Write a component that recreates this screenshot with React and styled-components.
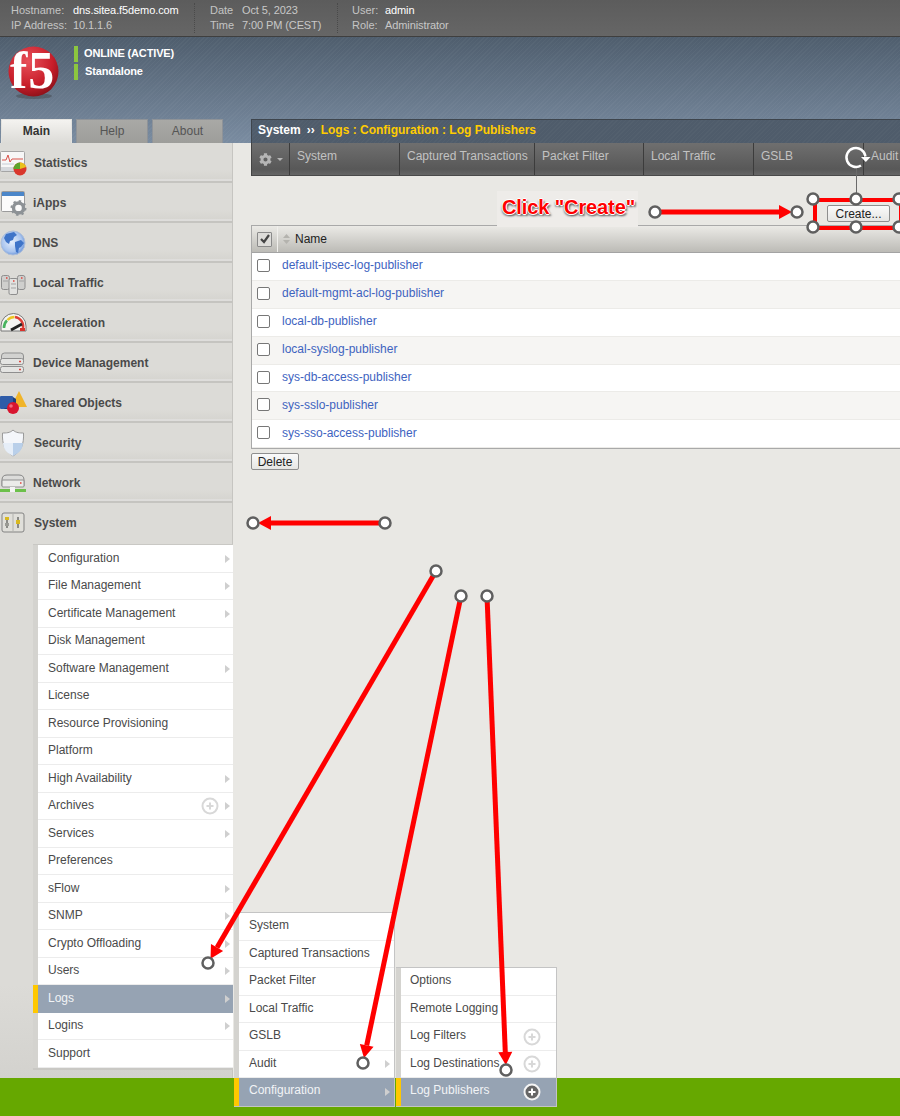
import React from 'react'
import styled, { createGlobalStyle } from 'styled-components'
import { FaCog } from 'react-icons/fa'

const Global = createGlobalStyle`
  html, body { margin: 0; padding: 0; background: #e9e8e4; overflow: hidden; }
  * { box-sizing: border-box; }
`

const Frame = styled.div`
  position: relative;
  width: 900px;
  height: 1116px;
  overflow: hidden;
  display: flex;
  flex-direction: column;
  font-family: "Liberation Sans", Arial, sans-serif;
  font-size: 12px;
  color: #444;
`

const TopBar = styled.div`
  height: 37px;
  flex: none;
  display: flex;
  padding: 3px 0 0 11px;
  background: linear-gradient(#5c5c5c, #666);
  border-bottom: 1px solid #3f3f3f;
  font-size: 11px;
  line-height: 14px;
  color: #c4c4c4;
`

const InfoBlock = styled.div`
  display: grid;
  grid-template-columns: ${p => p.$label}px auto;
  width: ${p => p.$width}px;
  margin-left: ${p => p.$shift || 0}px;
  height: 30px;
`

const InfoValue = styled.span`
  color: ${p => (p.$strong ? '#fff' : '#c8c8c8')};
  letter-spacing: -.1px;
`

const Divider = styled.div`
  width: 1px;
  height: 30px;
  border-left: 1px dotted #4a4a4a;
`

const Banner = styled.div`
  height: 106px;
  flex: none;
  display: flex;
  flex-direction: column;
  background:
    repeating-linear-gradient(135deg, rgba(255,255,255,.03) 0 1px, transparent 1px 3px),
    linear-gradient(#4f5e6e, #7a8ca1);
`

const Brand = styled.div`
  display: flex;
  padding: 9px 0 0 8px;
  gap: 14px;
`

const Logo = styled.svg`
  width: 52px;
  height: 54px;
  flex: none;
  overflow: visible;
`

const StatusList = styled.div`
  display: flex;
  flex-direction: column;
  gap: 2px;
`

const Status = styled.div`
  height: 16px;
  line-height: 14px;
  border-left: 4px solid #8cc63f;
  padding-left: ${p => p.$pad}px;
  font-size: 11px;
  font-weight: bold;
  letter-spacing: -.15px;
  color: #fff;
`

const BannerRow = styled.div`
  margin-top: auto;
  height: 24px;
  display: flex;
`

const Tabs = styled.div`
  width: 251px;
  flex: none;
  display: flex;
  gap: 4px;
  padding-left: 1px;
`

const Tab = styled.div`
  width: ${p => p.$width}px;
  height: 24px;
  line-height: 23px;
  text-align: center;
  color: ${p => (p.$active ? '#333' : '#555')};
  font-weight: ${p => (p.$active ? 'bold' : 'normal')};
  background: ${p => (p.$active ? 'linear-gradient(#f4f3f0, #dcdbd7)' : 'linear-gradient(#a9a9a6, #9d9d9a)')};
  border: 1px solid ${p => (p.$active ? '#e4e3df' : '#8f9398')};
  border-bottom: 0;
`

const TitleBar = styled.div`
  flex: 1;
  display: flex;
  align-items: center;
  gap: 6px;
  padding: 0 0 3px 6px;
  background:
    repeating-linear-gradient(135deg, rgba(255,255,255,.025) 0 1px, transparent 1px 3px),
    #4f5c6b;
  border: 1px solid #3e454d;
  border-bottom: 0;
  border-right: 0;
  font-weight: bold;
  color: #fff;
`

const Crumb = styled.span`
  color: #ffcc00;
`

const Main = styled.div`
  flex: 1;
  display: flex;
  min-height: 0;
`

const Sidebar = styled.div`
  width: 233px;
  flex: none;
  background: linear-gradient(#dcdbd7 90%, #d3d2ce);
  border-right: 1px solid #c6c5c1;
`

const NavItem = styled.div`
  height: 40px;
  display: flex;
  align-items: center;
  gap: ${p => p.$gap}px;
  padding-top: ${p => (p.$open ? 0 : 2)}px;
  font-weight: bold;
  color: #4a4a4a;
  background: ${p => (p.$open ? 'none' : 'linear-gradient(#dcdbd7 70%, #d5d4cf)')};
  border-bottom: ${p => (p.$open ? '0' : '2px solid #c5c4c0')};
  box-shadow: ${p => (p.$open ? 'none' : 'inset 0 -2px 0 #dedddb')};
`

const NavIcon = styled.svg`
  width: 28px;
  height: 28px;
  flex: none;
`

const Menu = styled.div`
  margin: 1px -1px 0 33px;
  border-top: 1px solid #c9c8c4;
  border-bottom: 2px solid #c9c8c4;
  background: #fff;
`

const Flyout = styled.div`
  position: absolute;
  left: ${p => p.$left}px;
  top: ${p => p.$top}px;
  width: ${p => p.$width}px;
  background: #fff;
  border: 1px solid #c4c4c4;
  border-left: 0;
`

const Row = styled.div`
  position: relative;
  height: 27.5px;
  display: flex;
  align-items: center;
  padding: 0 0 ${p => p.$lift}px ${p => p.$pad}px;
  border-left: 5px solid ${p => (p.$active ? '#ffc800' : '#d4d3cf')};
  background: ${p => (p.$active ? '#96a3b3' : '#fff')};
  color: ${p => (p.$active ? '#f2f4f6' : '#4a4a4a')};
  box-shadow: inset 0 -1px 0 ${p => (p.$active ? '#96a3b3' : '#ececec')};
`

const Caret = styled.span`
  position: absolute;
  right: ${p => p.$right}px;
  top: 50%;
  margin-top: -4px;
  border-left: 5px solid #cfcfcf;
  border-top: 4px solid transparent;
  border-bottom: 4px solid transparent;
`

const PlusIcon = styled.svg`
  position: absolute;
  right: ${p => p.$right}px;
  top: 50%;
  margin-top: -9px;
  width: 18px;
  height: 18px;
`

const Content = styled.div`
  flex: 1;
  min-width: 0;
  background: #e9e8e4;
  padding-left: 18px;
`

const TabStrip = styled.div`
  height: 33px;
  display: flex;
  background: linear-gradient(#6f6f6f, #585858 82%, #666);
  border-bottom: 1px solid #4a4a4a;
  border-left: 1px solid #444;
`

const StripTab = styled.div`
  width: ${p => p.$width}px;
  flex: none;
  padding: 6px 0 0 7px;
  color: #c2c2c2;
  border-right: 1px solid #3c3c3c;
`

const GearTab = styled(StripTab)`
  display: flex;
  align-items: center;
  justify-content: center;
  gap: 5px;
  padding: 0;
`

const GearCaret = styled.span`
  border-top: 3px solid #b5b5b5;
  border-left: 3.5px solid transparent;
  border-right: 3.5px solid transparent;
`

const ActionBar = styled.div`
  height: 49px;
  display: flex;
  justify-content: flex-end;
  padding: 29px 10px 0 0;
`

const Button = styled.button`
  height: 17px;
  width: ${p => p.$width}px;
  padding: 0;
  font: 12px "Liberation Sans", Arial, sans-serif;
  color: #222;
  background: linear-gradient(#fafafa, #e6e6e4);
  border: 1px solid #8e8e8e;
  border-radius: 2px;
`

const Table = styled.div`
  border-left: 1px solid #a9a9a9;
  border-top: 1px solid #a9a9a9;
  border-bottom: 1px solid #a9a9a9;
`

const HeaderRow = styled.div`
  height: 27px;
  display: flex;
  align-items: center;
  background: linear-gradient(#ebeae6, #bcbbb6);
  border-bottom: 1px solid #a3a3a3;
  color: #222;
`

const HeaderCheck = styled.div`
  width: 26px;
  height: 100%;
  flex: none;
  display: flex;
  align-items: center;
  justify-content: center;
  border-right: 1px solid #f0efec;
`

const CheckBox = styled.div`
  width: 15px;
  height: 15px;
  display: flex;
  align-items: center;
  justify-content: center;
  background: #dddcd9;
  border: 1px solid #8a8a8a;
  border-radius: 1px;
`

const SortMark = styled.svg`
  width: 7px;
  height: 10px;
  margin: 0 5px;
`

const TableRow = styled.div`
  height: 27.9px;
  display: flex;
  align-items: center;
  padding: 0 0 2px 5px;
  background: ${p => (p.$odd ? '#f6f5f3' : '#fff')};
  border-bottom: 1px solid #ecebe8;
`

const RowCheck = styled.div`
  width: 13px;
  height: 13px;
  margin-right: 12px;
  background: #fff;
  border: 1px solid #777;
  border-radius: 2px;
`

const Publisher = styled.a`
  color: #3e63bf;
`

const DeleteBar = styled.div`
  padding-top: 4px;
`

const Footer = styled.div`
  height: 38px;
  flex: none;
  background: #66a800;
`

const Overlay = styled.svg`
  position: absolute;
  left: 0;
  top: 0;
  pointer-events: none;
`

const Callout = styled.div`
  position: absolute;
  left: 497px;
  top: 191px;
  width: 141px;
  height: 36px;
  line-height: 32px;
  padding-left: 2px;
  text-align: center;
  background: #eeece9;
  font-size: 20px;
  font-weight: bold;
  letter-spacing: -.1px;
  color: #f00;
  text-shadow: 1px 0 0 #fff, -1px 0 0 #fff, 0 1px 0 #fff, 0 -1px 0 #fff, 2px 2px 2px #666, -1px 2px 2px #888;
  white-space: nowrap;
`

const StatisticsIcon = () => (
  <NavIcon viewBox="0 0 28 28">
    <rect x="0.5" y="2.5" width="24" height="20" rx="1" fill="#f7f7f7" stroke="#a5a5a5" />
    <rect x="1" y="18" width="23" height="4" fill="#d5d8dc" />
    <path d="M2 11h4l2-5 2 7 2-3h11" fill="none" stroke="#d9524a" />
    <path d="M2 15h12" stroke="#c6cdd6" />
    <circle cx="20" cy="20" r="6.5" fill="#d9372c" />
    <path d="M20 20V13.5a6.5 6.5 0 0 1 6.2 4.6z" fill="#e9c21c" />
    <path d="M20 20l-6.5 0a6.5 6.5 0 0 1 6.5-6.5z" fill="#5ea52c" />
  </NavIcon>
)

const AppsIcon = () => (
  <NavIcon viewBox="0 0 28 28">
    <rect x="1.5" y="2.5" width="23" height="20" rx="1" fill="#fbfbfb" stroke="#9b9b9b" />
    <rect x="2" y="3" width="22" height="4" fill="#4b86c9" />
    <circle cx="18.5" cy="19" r="5" fill="none" stroke="#8d9296" strokeWidth="3.4" />
    <circle cx="18.5" cy="19" r="7" fill="none" stroke="#8d9296" strokeWidth="2" strokeDasharray="2.4 3.1" />
  </NavIcon>
)

const GlobeIcon = () => (
  <NavIcon viewBox="0 0 28 28">
    <defs>
      <radialGradient id="globe" cx=".45" cy=".45" r=".6">
        <stop offset="0" stopColor="#e6effc" />
        <stop offset=".7" stopColor="#a9c4ee" />
        <stop offset="1" stopColor="#5b8ad6" />
      </radialGradient>
    </defs>
    <circle cx="13" cy="14" r="12" fill="url(#globe)" stroke="#aebfd9" />
    <path d="M6 5l8-2 3 3-3 2-1 3-3 1-1 3-3-2-2-4zM15 13l6-2 3 3-3 4-2 1-1 5-2-1-1-6z" fill="#3f74c8" />
  </NavIcon>
)

const TrafficIcon = () => (
  <NavIcon viewBox="0 0 28 28">
    <rect x="1.5" y="6.5" width="8" height="14" rx="2" fill="#cfcfcd" stroke="#8e8e8e" />
    <rect x="17.5" y="6.5" width="7.5" height="14" rx="2" fill="#cfcfcd" stroke="#8e8e8e" />
    <rect x="9" y="9.5" width="8.5" height="16" rx="1.5" fill="#e2e2e0" stroke="#8e8e8e" />
    <path d="M3 12h5M19 12h5M11 15h5M11 19h5" stroke="#a3a3a3" />
    <path d="M6 9h1.500M21 9h1.500M13 12h1.500" stroke="#e0443c" strokeWidth="1.500" />
  </NavIcon>
)

const GaugeIcon = () => (
  <NavIcon viewBox="0 0 28 28">
    <path d="M1 22v-5a12.500 12.500 0 0 1 25 0v5z" fill="#f5f5f3" stroke="#777" />
    <path d="M4 19a9.500 9.500 0 0 1 3-7.500" fill="none" stroke="#49b35f" strokeWidth="2.500" />
    <path d="M7.500 11a9.500 9.500 0 0 1 7-3" fill="none" stroke="#ecc626" strokeWidth="2.500" />
    <path d="M15 8a9.500 9.500 0 0 1 8 11" fill="none" stroke="#dd4038" strokeWidth="2.500" />
    <path d="M11 21l11-6" stroke="#222" strokeWidth="2.800" />
    <rect x="20" y="19" width="5" height="3" fill="#d8332c" />
  </NavIcon>
)

const DeviceIcon = () => (
  <NavIcon viewBox="0 0 28 28">
    <path d="M1.500 12V7q0-3 3-3h16q3 0 3 3v5z" fill="#d2d2d0" stroke="#8f8f8f" />
    <rect x="0.500" y="9.500" width="23" height="6" rx="2" fill="#e4e4e2" stroke="#8f8f8f" />
    <rect x="0.500" y="17.500" width="23" height="6" rx="2" fill="#e4e4e2" stroke="#8f8f8f" />
    <path d="M19 12.500h2M19 20.500h2" stroke="#e0443c" strokeWidth="1.500" />
  </NavIcon>
)

const SharedIcon = () => (
  <NavIcon viewBox="0 0 28 28">
    <path d="M19 2l8 16H11z" fill="#f0b429" />
    <rect x="0" y="7" width="13" height="13" rx="1" fill="#2f5ca8" />
    <path d="M13 8l3 2v10H5l-1-1h9z" fill="#1c3f7d" />
    <circle cx="13" cy="19" r="6" fill="#d8152f" />
    <circle cx="11" cy="17" r="1.800" fill="#f06b7d" />
  </NavIcon>
)

const ShieldIcon = () => (
  <NavIcon viewBox="0 0 28 28">
    <path d="M13 1c3 3 7 3 10.500 3 .5 11-2 18-10.500 23C4.500 22 2 15 2.500 4 6 4 10 4 13 1z" fill="#f4f6fa" stroke="#9a9a9a" />
    <path d="M13 2v12h10c-.5 6-3.500 10-10 13z" fill="#b9cfe9" />
    <path d="M13 14H3c.5 6 3.500 10 10 13z" fill="#e6eef8" />
  </NavIcon>
)

const NetworkIcon = () => (
  <NavIcon viewBox="0 0 28 28">
    <path d="M2 17v-6q0-5 5-5h12q5 0 5 5v6z" fill="#dcdcda" stroke="#858585" />
    <rect x="2" y="11" width="22" height="7" rx="1" fill="#ebebe9" stroke="#909090" />
    <path d="M20 14h1.500" stroke="#e0443c" strokeWidth="1.600" />
    <rect x="0" y="20" width="26" height="3" fill="#6cc04a" />
    <rect x="10" y="18" width="5" height="5" fill="#f4f4f4" />
  </NavIcon>
)

const SystemIcon = () => (
  <NavIcon viewBox="0 0 28 28">
    <rect x="2" y="4" width="22" height="19" rx="2" fill="#e0dfda" stroke="#838383" />
    <path d="M13 5v17" stroke="#b2b2ae" />
    <path d="M7 8v11M18 8v11" stroke="#8a8a86" strokeWidth="2" />
    <rect x="5" y="8" width="4" height="3" fill="#d8b820" />
    <rect x="5" y="14" width="4" height="3" fill="#9b9b95" />
    <rect x="16" y="11" width="4" height="4" fill="#d8b820" />
  </NavIcon>
)

const navItems = [
  { label: 'Statistics', icon: StatisticsIcon, gap: 6 },
  { label: 'iApps', icon: AppsIcon, gap: 5 },
  { label: 'DNS', icon: GlobeIcon, gap: 5 },
  { label: 'Local Traffic', icon: TrafficIcon, gap: 5 },
  { label: 'Acceleration', icon: GaugeIcon, gap: 5 },
  { label: 'Device Management', icon: DeviceIcon, gap: 5 },
  { label: 'Shared Objects', icon: SharedIcon, gap: 6 },
  { label: 'Security', icon: ShieldIcon, gap: 6 },
  { label: 'Network', icon: NetworkIcon, gap: 5 },
]

const systemMenu = [
  { label: 'Configuration', more: true },
  { label: 'File Management', more: true },
  { label: 'Certificate Management', more: true },
  { label: 'Disk Management' },
  { label: 'Software Management', more: true },
  { label: 'License' },
  { label: 'Resource Provisioning' },
  { label: 'Platform' },
  { label: 'High Availability', more: true },
  { label: 'Archives', more: true, plus: true },
  { label: 'Services', more: true },
  { label: 'Preferences' },
  { label: 'sFlow', more: true },
  { label: 'SNMP', more: true },
  { label: 'Crypto Offloading', more: true },
  { label: 'Users', more: true },
  { label: 'Logs', more: true, active: true },
  { label: 'Logins', more: true },
  { label: 'Support' },
]

const logsMenu = [
  { label: 'System' },
  { label: 'Captured Transactions' },
  { label: 'Packet Filter' },
  { label: 'Local Traffic' },
  { label: 'GSLB' },
  { label: 'Audit', more: true },
  { label: 'Configuration', more: true, active: true },
]

const configMenu = [
  { label: 'Options' },
  { label: 'Remote Logging' },
  { label: 'Log Filters', plus: true },
  { label: 'Log Destinations', plus: true },
  { label: 'Log Publishers', plus: true, active: true },
]

const stripTabs = [
  { label: 'System', width: 110 },
  { label: 'Captured Transactions', width: 135 },
  { label: 'Packet Filter', width: 109 },
  { label: 'Local Traffic', width: 110 },
  { label: 'GSLB', width: 110 },
  { label: 'Audit', width: 60 },
]

const publishers = [
  'default-ipsec-log-publisher',
  'default-mgmt-acl-log-publisher',
  'local-db-publisher',
  'local-syslog-publisher',
  'sys-db-access-publisher',
  'sys-sslo-publisher',
  'sys-sso-access-publisher',
]

const Plus = ({ active, right }) => (
  <PlusIcon $right={right} viewBox="0 0 18 18">
    <circle cx="9" cy="9" r="7.500" fill={active ? '#666' : '#fff'} stroke={active ? '#f4f4f4' : '#d8d8d8'} strokeWidth="2" />
    <path d="M9 5.500v7M5.500 9h7" stroke={active ? '#fff' : '#d8d8d8'} strokeWidth="2" />
  </PlusIcon>
)

const MenuRows = ({ items, pad, lift, caretRight, plusRight }) =>
  items.map(item => (
    <Row key={item.label} $active={item.active} $pad={pad} $lift={lift}>
      {item.label}
      {item.plus && <Plus active={item.active} right={plusRight} />}
      {item.more && <Caret $right={caretRight} />}
    </Row>
  ))

const Handle = ({ x, y }) => (
  <circle cx={x} cy={y} r="5.500" fill="#fff" stroke="#5f5f5f" strokeWidth="2.500" />
)

// red line with a head at the far end, and a handle on both ends
const Arrow = ({ from, to }) => {
  const [x1, y1] = from
  const [x2, y2] = to
  const len = Math.hypot(x2 - x1, y2 - y1)
  const ux = (x2 - x1) / len
  const uy = (y2 - y1) / len
  const tipX = x2 - ux * 5
  const tipY = y2 - uy * 5
  const baseX = tipX - ux * 13
  const baseY = tipY - uy * 13
  const head = `${tipX},${tipY} ${baseX - uy * 7},${baseY + ux * 7} ${baseX + uy * 7},${baseY - ux * 7}`
  return (
    <g>
      <line x1={x1} y1={y1} x2={baseX} y2={baseY} stroke="#f00" strokeWidth="5" />
      <polygon points={head} fill="#f00" />
      <Handle x={x1} y={y1} />
      <Handle x={x2} y={y2} />
    </g>
  )
}

const Annotations = () => (
  <Overlay width="900" height="1116" viewBox="0 0 900 1116">
    <line x1="856.500" y1="167" x2="856.500" y2="199" stroke="#6a6a6a" />
    <path d="M861 165.500A9.500 9.500 0 1 1 865.400 156.500" fill="none" stroke="#fff" strokeWidth="2.500" />
    <path d="M861 157h9.500l-4.700 5z" fill="#fff" />
    <rect x="815" y="200" width="86" height="28" fill="none" stroke="#f00" strokeWidth="4" />
    {[813, 856, 899].map(x => (
      <g key={x}>
        <Handle x={x} y={199} />
        <Handle x={x} y={227} />
      </g>
    ))}
    <Arrow from={[655, 212]} to={[797, 212]} />
    <Arrow from={[385, 523]} to={[253, 523]} />
    <Arrow from={[436, 571]} to={[208, 963]} />
    <Arrow from={[461, 596]} to={[363, 1063]} />
    <Arrow from={[487, 596]} to={[506, 1070]} />
  </Overlay>
)

const App = () => (
  <Frame>
    <Global />
    <TopBar>
      <InfoBlock $label={62} $width={183}>
        <span>Hostname:</span><InfoValue $strong>dns.sitea.f5demo.com</InfoValue>
        <span>IP Address:</span><InfoValue>10.1.1.6</InfoValue>
      </InfoBlock>
      <Divider />
      <InfoBlock $label={32} $width={127} $shift={15}>
        <span>Date</span><InfoValue>Oct 5, 2023</InfoValue>
        <span>Time</span><InfoValue>7:00 PM (CEST)</InfoValue>
      </InfoBlock>
      <Divider />
      <InfoBlock $label={33} $width={120} $shift={14}>
        <span>User:</span><InfoValue $strong>admin</InfoValue>
        <span>Role:</span><InfoValue>Administrator</InfoValue>
      </InfoBlock>
    </TopBar>
    <Banner>
      <Brand>
        <Logo viewBox="0 0 52 54">
          <defs>
            <radialGradient id="ball" cx=".4" cy=".3" r=".8">
              <stop offset="0" stopColor="#e8505a" />
              <stop offset=".6" stopColor="#c81e2a" />
              <stop offset="1" stopColor="#7c0d15" />
            </radialGradient>
          </defs>
          <ellipse cx="26" cy="50" rx="18" ry="3" fill="#333" opacity=".35" />
          <circle cx="25.500" cy="25.500" r="25" fill="url(#ball)" />
          <text x="2" y="42" fontFamily="Liberation Serif, serif" fontSize="52" fontWeight="bold" letterSpacing="1" fill="#fff">f5</text>
        </Logo>
        <StatusList>
          <Status $pad={6}>ONLINE (ACTIVE)</Status>
          <Status $pad={7}>Standalone</Status>
        </StatusList>
      </Brand>
      <BannerRow>
        <Tabs>
          <Tab $width={71} $active>Main</Tab>
          <Tab $width={72}>Help</Tab>
          <Tab $width={71}>About</Tab>
        </Tabs>
        <TitleBar>
          System <span>››</span> <Crumb>Logs : Configuration : Log Publishers</Crumb>
        </TitleBar>
      </BannerRow>
    </Banner>
    <Main>
      <Sidebar>
        {navItems.map(({ label, icon: Icon, gap }) => (
          <NavItem key={label} $gap={gap}>
            <Icon />
            {label}
          </NavItem>
        ))}
        <NavItem $open $gap={6}>
          <SystemIcon />
          System
        </NavItem>
        <Menu>
          <MenuRows items={systemMenu} pad={10} lift={2} caretRight={3} plusRight={14} />
        </Menu>
      </Sidebar>
      <Content>
        <TabStrip>
          <GearTab $width={38}>
            <FaCog size={13} color="#b5b5b5" />
            <GearCaret />
          </GearTab>
          {stripTabs.map(tab => (
            <StripTab key={tab.label} $width={tab.width}>{tab.label}</StripTab>
          ))}
        </TabStrip>
        <ActionBar>
          <Button $width={63}>Create...</Button>
        </ActionBar>
        <Table>
          <HeaderRow>
            <HeaderCheck>
              <CheckBox>
                <svg width="12" height="12" viewBox="0 0 12 12">
                  <path d="M2 6l3 3 5-7" fill="none" stroke="#444" strokeWidth="2.200" />
                </svg>
              </CheckBox>
            </HeaderCheck>
            <SortMark viewBox="0 0 7 10">
              <path d="M3.500 0L7 4H0zM3.500 10L0 6h7z" fill="#b4b3ae" />
            </SortMark>
            Name
          </HeaderRow>
          {publishers.map((name, i) => (
            <TableRow key={name} $odd={i % 2 === 1}>
              <RowCheck />
              <Publisher>{name}</Publisher>
            </TableRow>
          ))}
        </Table>
        <DeleteBar>
          <Button $width={48}>Delete</Button>
        </DeleteBar>
      </Content>
    </Main>
    <Footer />
    <Flyout $left={234} $top={912} $width={161}>
      <MenuRows items={logsMenu} pad={10} lift={3} caretRight={4} plusRight={14} />
    </Flyout>
    <Flyout $left={396} $top={967} $width={161}>
      <MenuRows items={configMenu} pad={9} lift={3} caretRight={4} plusRight={15} />
    </Flyout>
    <Callout>Click "Create"</Callout>
    <Annotations />
  </Frame>
)

export default App
